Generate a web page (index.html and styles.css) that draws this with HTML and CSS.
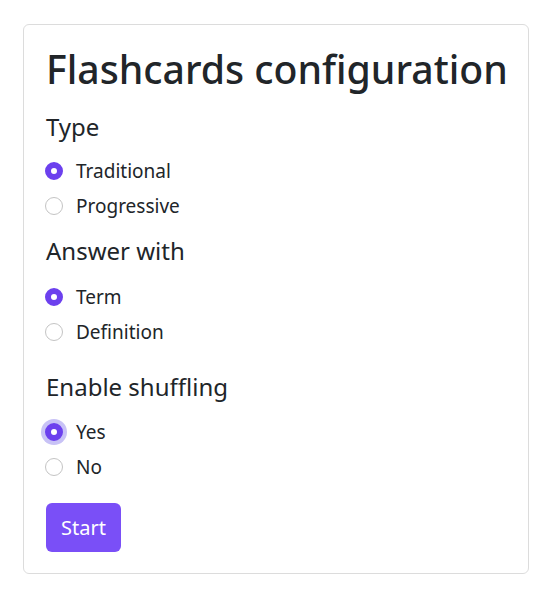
FILE: index.html
```html
<!DOCTYPE html>
<html>
<head>
<meta charset="utf-8">
<link rel="stylesheet" href="styles.css">
</head>
<body>
<div class="card">
  <h1 class="title">Flashcards configuration</h1>
  <div class="group first">
    <h2 class="label">Type</h2>
    <label class="opt"><input type="radio" name="type" checked><span>Traditional</span></label>
    <label class="opt"><input type="radio" name="type"><span>Progressive</span></label>
  </div>
  <div class="group answer">
    <h2 class="label">Answer with</h2>
    <label class="opt"><input type="radio" name="ans" checked><span>Term</span></label>
    <label class="opt"><input type="radio" name="ans"><span>Definition</span></label>
  </div>
  <div class="group shuffle">
    <h2 class="label">Enable shuffling</h2>
    <label class="opt"><input type="radio" name="sh" class="focus" checked><span>Yes</span></label>
    <label class="opt"><input type="radio" name="sh"><span>No</span></label>
  </div>
  <button class="start">Start</button>
</div>
</body>
</html>
```
FILE: styles.css
```css
html, body { margin: 0; padding: 0; background: #fff; }
body {
  font-family: "Noto Sans", "Open Sans", sans-serif;
  color: #212529;
  padding: 24px 21px 0 23px;
}
.card {
  border: 1px solid #dcdcdc;
  border-radius: 6px;
  padding: 20px 22px 21px 22px;
  display: flex;
  flex-direction: column;
  align-items: flex-start;
}
.title {
  margin: 0;
  font-size: 39.2px;
  font-weight: 500;
  line-height: 48px;
  white-space: nowrap;
}
.group { display: flex; flex-direction: column; margin-top: 13px; }
.group.first { margin-top: 19px; }
.group.shuffle { margin-top: 23px; }
.label {
  margin: 0 0 12px 0;
  font-size: 24px;
  font-weight: 400;
  line-height: 30px;
}
.answer .label { margin-bottom: 14px; }
.shuffle .label { margin-bottom: 13px; }
.opt {
  display: flex;
  align-items: center;
  height: 34.5px;
  font-size: 19px;
}
.opt input {
  appearance: none;
  -webkit-appearance: none;
  margin: 0 13px 0 -1px;
  width: 18px;
  height: 18px;
  border: 1.5px solid #c4c4c4;
  border-radius: 50%;
  background: #fff;
}
.opt input:checked {
  border: 6px solid #6c40ee;
  background: #fff;
}
.opt input.focus { box-shadow: 0 0 0 4px #c8c2f6; }
.start {
  margin-top: 19px;
  background: #7a4ff7;
  color: #fff;
  border: none;
  border-radius: 6px;
  font-family: inherit;
  font-size: 20px;
  padding: 0 15px;
  height: 49px;
}
```
